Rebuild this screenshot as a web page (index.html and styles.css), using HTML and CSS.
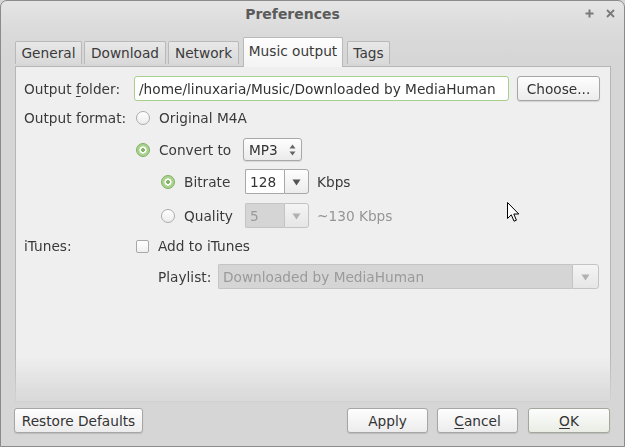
FILE: index.html
```html
<!DOCTYPE html>
<html>
<head>
<meta charset="utf-8">
<title>Preferences</title>
<link rel="stylesheet" href="styles.css">
</head>
<body>
<div class="window">
  <div class="titlebar">
    <div class="title">Preferences</div>
    <div class="wm-buttons">
      <svg class="wm" width="9" height="9" viewBox="0 0 9 9"><path d="M4.5 0.5v8M0.5 4.5h8" stroke="#7a7a7a" stroke-width="2"/></svg>
      <svg class="wm" width="9" height="9" viewBox="0 0 9 9"><path d="M1 1l7 7M8 1l-7 7" stroke="#7a7a7a" stroke-width="1.8"/></svg>
    </div>
  </div>

  <div class="notebook">
    <div class="tabs">
      <div class="tab t-general">General</div>
      <div class="tab t-download">Download</div>
      <div class="tab t-network">Network</div>
      <div class="tab active">Music output</div>
      <div class="tab t-tags">Tags</div>
    </div>
    <div class="panel">
      <div class="row r1">
        <div class="lbl">Output <u>f</u>older:</div>
        <div class="entry">/home/linuxaria/Music/Downloaded by MediaHuman</div>
        <div class="btn choose">Choose...</div>
      </div>
      <div class="row r2">
        <div class="lbl">Output format:</div>
        <span class="radio"></span><span>Original M4A</span>
      </div>
      <div class="row r3">
        <div class="lbl"></div>
        <span class="radio on"></span><span class="opt conv">Convert to</span>
        <div class="spin">MP3
          <svg class="spin-arrows" width="7" height="12" viewBox="0 0 7 12"><path d="M3.5 0.5L6.5 4.5H0.5Z M3.5 11.5L6.5 7.5H0.5Z" fill="#666"/></svg>
        </div>
      </div>
      <div class="row r4">
        <div class="lbl"></div>
        <span class="radio on sub"></span><span class="opt sopt">Bitrate</span>
        <div class="combo small"><div class="cval">128</div><div class="cbtn"><svg width="9" height="7" viewBox="0 0 9 7"><path d="M0.5 0.5H8.5L4.5 6.5Z" fill="#555"/></svg></div></div>
        <span class="unit">Kbps</span>
      </div>
      <div class="row r5">
        <div class="lbl"></div>
        <span class="radio sub"></span><span class="opt sopt">Quality</span>
        <div class="combo small disabled"><div class="cval">5</div><div class="cbtn"><svg width="9" height="7" viewBox="0 0 9 7"><path d="M0.5 0.5H8.5L4.5 6.5Z" fill="#b0b0b0"/></svg></div></div>
        <span class="unit dim">~130 Kbps</span>
      </div>
      <div class="row r6">
        <div class="lbl">iTunes:</div>
        <span class="check"></span><span>Add to iTunes</span>
      </div>
      <div class="row r7">
        <div class="lbl"></div>
        <span class="plbl">Playlist:</span>
        <div class="combo wide disabled"><div class="cval">Downloaded by MediaHuman</div><div class="cbtn"><svg width="9" height="7" viewBox="0 0 9 7"><path d="M0.5 0.5H8.5L4.5 6.5Z" fill="#b0b0b0"/></svg></div></div>
      </div>
    </div>
  </div>

  <div class="actions">
    <div class="btn restore">Restore Defaults</div>
    <div class="spacer"></div>
    <div class="btn act">Apply</div>
    <div class="btn act"><u>C</u>ancel</div>
    <div class="btn act ok"><u>O</u>K</div>
  </div>

  <svg class="pointer" width="13" height="21" viewBox="0 0 13 21"><path d="M0.5 0.5V16.5L4.3 12.8L7 19.2L9.4 18.2L6.8 12H11.8Z" fill="#fff" stroke="#000" stroke-width="1" stroke-linejoin="round"/></svg>
</div>
</body>
</html>
```

FILE: styles.css
```css
html, body {
  margin: 0;
  padding: 0;
  background: #d6d6d6;
}
body {
  font-family: "DejaVu Sans", "Liberation Sans", sans-serif;
  font-size: 13.7px;
  color: #3a3a3a;
}
u { text-decoration: underline; text-underline-offset: 2px; }

.window {
  position: relative;
  width: 625px;
  height: 447px;
  box-sizing: border-box;
  border: 1px solid #8b8b8b;
  border-radius: 7px 7px 0 0;
  background: linear-gradient(#e5e5e5 0, #dadada 30px, #d6d6d6 60px);
  display: flex;
  flex-direction: column;
  overflow: hidden;
}

.titlebar {
  height: 25px;
  display: flex;
  align-items: center;
  flex: none;
}
.title {
  flex: 1;
  text-align: center;
  font-weight: bold;
  font-size: 14px;
  color: #5b5b5b;
  padding-top: 1px;
}
.wm-buttons {
  width: 40px;
  display: flex;
  gap: 12px;
  align-items: center;
  padding-left: 1px;
  box-sizing: border-box;
}

.notebook {
  flex: 1;
  display: flex;
  flex-direction: column;
  margin: 11px 13px 0 14px;
}
.tabs {
  display: flex;
  align-items: flex-end;
  height: 29px;
  flex: none;
}
.tab {
  height: 23px;
  box-sizing: border-box;
  padding: 0 0 1px;
  margin-right: 2px;
  border: 1px solid #b9b9b9;
  border-bottom: none;
  border-radius: 2px 2px 0 0;
  background: linear-gradient(#e8e8e8, #d9d9d9);
  display: flex;
  align-items: center;
  justify-content: center;
  margin-bottom: 2px;
  color: #3a3a3a;
  white-space: nowrap;
}
.t-general { width: 67px; }
.t-download { width: 82px; }
.t-network { width: 71px; }
.t-tags { width: 43px; }
.tab.active {
  width: 100px;
  height: 30px;
  margin: 0 4px -1px 2px;
  padding: 0 0 4px;
  background: linear-gradient(#fdfdfd, #f4f4f4);
  position: relative;
  z-index: 1;
}

.panel {
  flex: 1;
  border: 1px solid #b6b6b6;
  background: #efefef;
  padding: 9px 10px 0 8px;
  -webkit-mask-image: linear-gradient(#000 86%, rgba(0,0,0,0.15) 99%);
  mask-image: linear-gradient(#000 86%, rgba(0,0,0,0.15) 99%);
}

.row {
  display: flex;
  align-items: center;
}
.lbl { width: 110px; flex: none; }
.r1 { height: 25px; }
.r2 { height: 20px; margin-top: 7px; }
.r3 { height: 23px; margin-top: 10px; }
.r4 { height: 25px; margin-top: 8px; }
.r5 { height: 25px; margin-top: 9px; }
.r6 { height: 20px; margin-top: 8px; }
.r7 { height: 25px; margin-top: 8px; }

.entry {
  width: 375px;
  height: 25px;
  box-sizing: border-box;
  border: 1px solid #a6d08b;
  border-radius: 3px;
  background: #fff;
  padding: 0 4px;
  display: flex;
  align-items: center;
  color: #333;
  white-space: nowrap;
}

.btn {
  height: 25px;
  box-sizing: border-box;
  border: 1px solid #a6a6a6;
  border-radius: 3px;
  background: linear-gradient(#fefefe, #ececec);
  box-shadow: 0 1px 1px rgba(0,0,0,0.12);
  display: flex;
  align-items: center;
  justify-content: center;
  color: #333;
}
.choose { width: 83px; margin-left: 8px; }

.radio {
  width: 14px;
  height: 14px;
  box-sizing: border-box;
  border-radius: 50%;
  border: 1px solid #acacac;
  background: linear-gradient(#ffffff, #ececec);
  margin: 0 9px 0 2px;
  flex: none;
}
.radio.on {
  border-color: #7fae60;
  background: radial-gradient(circle, #85b365 0 1.6px, #ffffff 2.2px 3.3px, #a9d38e 3.9px);
}
.radio.sub { margin-left: 27px; }
.conv { width: 84px; }
.sopt { width: 61px; }

.spin {
  width: 59px;
  height: 23px;
  box-sizing: border-box;
  border: 1px solid #a8a8a8;
  border-radius: 3px;
  background: linear-gradient(#fefefe, #ebebeb);
  box-shadow: 0 1px 1px rgba(0,0,0,0.1);
  display: flex;
  align-items: center;
  justify-content: space-between;
  padding: 0 5px 0 5px;
  color: #333;
}

.combo {
  height: 25px;
  display: flex;
  box-sizing: border-box;
}
.combo.small { width: 64px; }
.combo .cval {
  flex: 1;
  border: 1px solid #a8a8a8;
  border-right: none;
  border-radius: 2px 0 0 2px;
  background: #fff;
  display: flex;
  align-items: center;
  padding: 0 4px;
  color: #333;
  white-space: nowrap;
}
.combo .cbtn {
  width: 25px;
  box-sizing: border-box;
  border: 1px solid #a8a8a8;
  border-radius: 0 3px 3px 0;
  background: linear-gradient(#fdfdfd, #ececec);
  display: flex;
  align-items: center;
  justify-content: center;
  padding-top: 2px;
}
.combo.disabled .cval {
  background: #d5d5d5;
  border-color: #c4c4c4;
  color: #9a9a9a;
}
.combo.disabled .cbtn {
  background: linear-gradient(#f4f4f4, #e6e6e6);
  border-color: #c4c4c4;
}
.combo.wide { flex: 1; margin-right: 1px; }
.combo.wide .cbtn { width: 27px; }

.unit { margin-left: 8px; }
.dim { color: #959595; }

.check {
  width: 13px;
  height: 13px;
  box-sizing: border-box;
  border: 1px solid #a8a8a8;
  border-radius: 2px;
  background: linear-gradient(#fff, #efefef);
  margin: 0 9px 0 2px;
}
.plbl { margin-left: 24px; width: 60px; }

.actions {
  flex: none;
  display: flex;
  align-items: center;
  padding: 6px 14px 13px 13px;
  gap: 9px;
}
.spacer { flex: 1; }
.restore { width: 129px; }
.act { width: 81px; }
.ok {
  width: 82px;
  margin-left: 1px;
  background: linear-gradient(#fdfdfd, #e9ede4);
  border-color: #a2a79c;
}

.pointer {
  position: absolute;
  left: 506px;
  top: 201px;
}
```
